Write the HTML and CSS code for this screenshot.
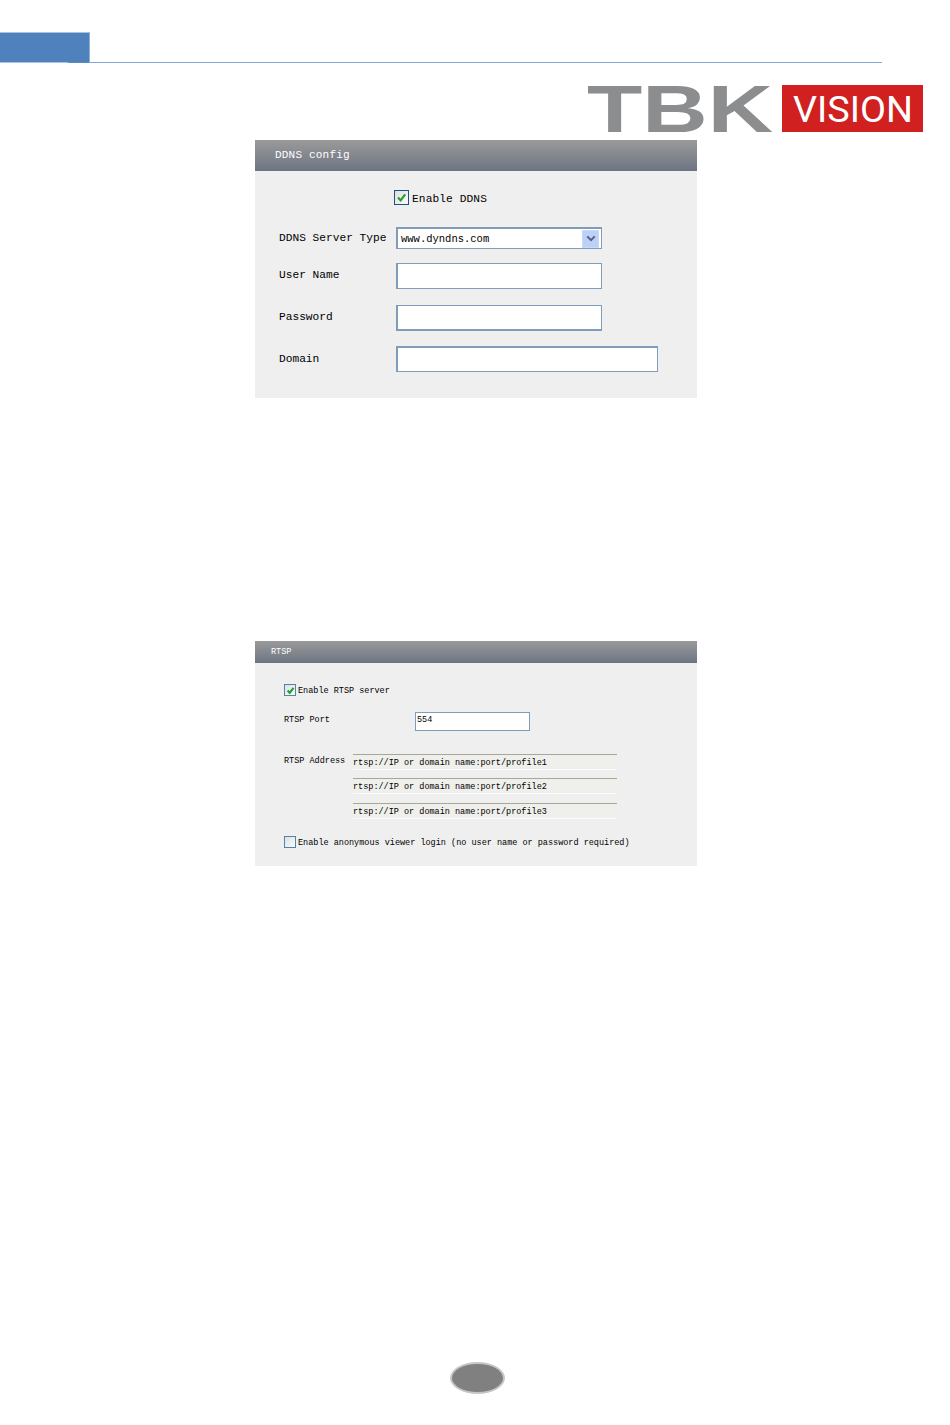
FILE: index.html
```html
<!DOCTYPE html>
<html lang="en">
<head>
<meta charset="utf-8">
<title>DDNS and RTSP configuration</title>
<link rel="stylesheet" href="styles.css">
</head>
<body>
<div class="page">
  <header class="top">
    <div class="tab"></div>
  </header>
  <div class="logo-row">
    <svg class="logo" width="336" height="48" viewBox="0 0 336 48" role="img" aria-label="TBK Vision">
      <text class="logo-tbk" x="0" y="47" textLength="186" lengthAdjust="spacingAndGlyphs">TBK</text>
      <rect x="195" y="0" width="141" height="47" fill="#d0201f"/>
      <text class="logo-vision" x="206" y="37" textLength="120" lengthAdjust="spacingAndGlyphs">VISION</text>
    </svg>
  </div>

  <section class="panel panel-ddns">
    <h2 class="panel-title">DDNS config</h2>
    <div class="ddns-body">
      <label class="check-row">
        <span class="check check-dark">
          <svg width="11" height="11" viewBox="0 0 11 11"><path d="M2 5.5 L4.6 8.4 L9.2 2.4" fill="none" stroke="#1fa12c" stroke-width="2.2"/></svg>
        </span>
        <span class="check-text">Enable DDNS</span>
      </label>
      <div class="form-row row-select">
        <span class="label">DDNS Server Type</span>
        <div class="field select">
          <span>www.dyndns.com</span>
          <span class="select-btn">
            <svg width="10" height="7" viewBox="0 0 12 8"><path d="M1.5 1.5 L6 6 L10.5 1.5" fill="none" stroke="#4d6185" stroke-width="2.4"/></svg>
          </span>
        </div>
      </div>
      <div class="form-row row-user">
        <span class="label">User Name</span>
        <div class="field input"></div>
      </div>
      <div class="form-row row-pass">
        <span class="label">Password</span>
        <div class="field input input-pass"></div>
      </div>
      <div class="form-row row-domain">
        <span class="label">Domain</span>
        <div class="field input input-wide"></div>
      </div>
    </div>
  </section>

  <section class="panel panel-rtsp">
    <h2 class="panel-title">RTSP</h2>
    <div class="rtsp-body">
      <label class="check-row">
        <span class="check check-small check-blue">
          <svg width="9" height="9" viewBox="0 0 11 11"><path d="M2 5.5 L4.6 8.4 L9.2 2.4" fill="none" stroke="#1fa12c" stroke-width="2.6"/></svg>
        </span>
        <span class="check-text">Enable RTSP server</span>
      </label>
      <div class="port-row">
        <span class="port-label">RTSP Port</span>
        <div class="port-input">554</div>
      </div>
      <div class="addr-row">
        <span class="addr-label">RTSP Address</span>
        <div class="addr-list">
          <div class="addr">rtsp://IP or domain name:port/profile1</div>
          <div class="addr">rtsp://IP or domain name:port/profile2</div>
          <div class="addr">rtsp://IP or domain name:port/profile3</div>
        </div>
      </div>
      <label class="check-row anon-row">
        <span class="check check-small check-blue"></span>
        <span class="check-text">Enable anonymous viewer login (no user name or password required)</span>
      </label>
    </div>
  </section>

  <footer class="page-foot">
    <div class="page-num"></div>
  </footer>
</div>
</body>
</html>
```

FILE: styles.css
```css
* { box-sizing: border-box; }

html, body {
  margin: 0;
  padding: 0;
  background: #fff;
}

.page {
  width: 950px;
  height: 1425px;
  display: flex;
  flex-direction: column;
  font-family: "Liberation Mono", "DejaVu Sans Mono", monospace;
  color: #000;
  overflow: hidden;
}

.top {
  width: 882px;
  height: 31px;
  margin-top: 32px;
  border-bottom: 1px solid #7fa8dc;
}

.tab {
  width: 90px;
  height: 31px;
  background:
    linear-gradient(to right, #a9c3e3 68px, #5a8ac5 68px) left bottom / 100% 1px no-repeat,
    #4f81bd;
  border-top: 1px solid #a9c3e3;
  border-right: 1px solid #8fb0da;
}

.logo-row {
  display: flex;
  justify-content: flex-end;
  padding-right: 27px;
  margin-top: 22px;
  height: 55px;
}

.logo {
  display: block;
  overflow: visible;
}

.logo-tbk {
  font-family: "Liberation Sans", sans-serif;
  font-weight: 700;
  font-size: 67px;
  fill: #8c8d8f;
}

.logo-vision {
  font-family: "Roboto", sans-serif;
  font-weight: 400;
  font-size: 36px;
  fill: #fff;
}

.panel {
  width: 442px;
  margin-left: 255px;
  background: #efefef;
}

.panel-title {
  margin: 0;
  font-weight: 400;
  color: #fff;
  background: linear-gradient(#9a9a9a, #6d7482);
}

.panel-ddns { height: 258px; }

.panel-ddns .panel-title {
  height: 31px;
  padding-left: 20px;
  font-size: 11px;
  line-height: 30px;
  letter-spacing: 0.2px;
}

.ddns-body {
  padding: 19px 0 0 24px;
  font-size: 11.2px;
}

.check-row {
  display: flex;
  align-items: center;
}

.check-text { padding-top: 1px; }

.panel-ddns .check-row {
  height: 15px;
  margin-left: 115px;
  gap: 3px;
}

.panel-ddns .check-text {
  padding-top: 2px;
  letter-spacing: 0.1px;
}

.check {
  display: flex;
  align-items: center;
  justify-content: center;
  flex: none;
  background: linear-gradient(135deg, #dfdfdf, #fafafa);
}

.check-dark {
  width: 15px;
  height: 15px;
  border: 1px solid #1c5180;
}

.check-small {
  width: 12px;
  height: 12px;
}

.check-blue { border: 1px solid #4d85ae; }

.form-row {
  display: flex;
  align-items: flex-start;
}

.label {
  width: 117px;
  flex: none;
  line-height: 14px;
}

.row-select { margin-top: 22px; }
.row-select .label { padding-top: 4px; }
.row-user { margin-top: 14px; }
.row-user .label { padding-top: 5px; }
.row-pass { margin-top: 16px; }
.row-pass .label { padding-top: 5px; }
.row-domain { margin-top: 15px; }
.row-domain .label { padding-top: 6px; }

.field {
  width: 206px;
  background: #fff;
  border: 1px solid #7f9db9;
  border-left-width: 2px;
}

.input { height: 26px; }
.input-pass { border-bottom-width: 2px; }
.input-wide { width: 262px; border-top-width: 2px; }

.select {
  height: 22px;
  display: flex;
  align-items: center;
  justify-content: space-between;
  padding: 0 2px 0 3px;
  font-size: 10.5px;
  border-top-width: 2px;
}

.select-btn {
  width: 17px;
  height: 18px;
  display: flex;
  align-items: center;
  justify-content: center;
  background: #bdd0f7;
  border: 1px solid #c9d8f8;
}

.panel-rtsp {
  height: 225px;
  margin-top: 243px;
}

.panel-rtsp .panel-title {
  height: 22px;
  padding-left: 16px;
  font-size: 8.5px;
  line-height: 22px;
}

.rtsp-body {
  padding: 21px 0 0 29px;
  font-size: 8.5px;
  line-height: 12px;
}

.rtsp-body .check-row { gap: 2px; height: 12px; }

.port-row {
  display: flex;
  align-items: center;
  margin-top: 16px;
  height: 19px;
}

.port-label {
  width: 131px;
  flex: none;
  padding-bottom: 4px;
}

.port-input {
  width: 115px;
  height: 19px;
  background: #fff;
  border: 1px solid #7f9db9;
  padding-left: 1px;
  line-height: 15px;
}

.addr-row {
  display: flex;
  align-items: flex-start;
  margin-top: 23px;
}

.addr-label {
  width: 69px;
  flex: none;
  padding-top: 1px;
}

.addr-list {
  display: flex;
  flex-direction: column;
  gap: 8px;
}

.addr {
  width: 264px;
  height: 16px;
  background: #efefec;
  border-top: 1px solid #a8a89a;
  border-bottom: 1px solid #fbfbfb;
  line-height: 16px;
  white-space: nowrap;
}

.addr:last-child { margin-top: 1px; }

.rtsp-body .anon-row { margin-top: 17px; }

.page-foot {
  display: flex;
  justify-content: center;
  margin-top: auto;
  padding: 0 0 31px 5px;
}

.page-num {
  width: 55px;
  height: 32px;
  border-radius: 50%;
  background: #808080;
  border: 2px solid #c6c6c6;
}
```
